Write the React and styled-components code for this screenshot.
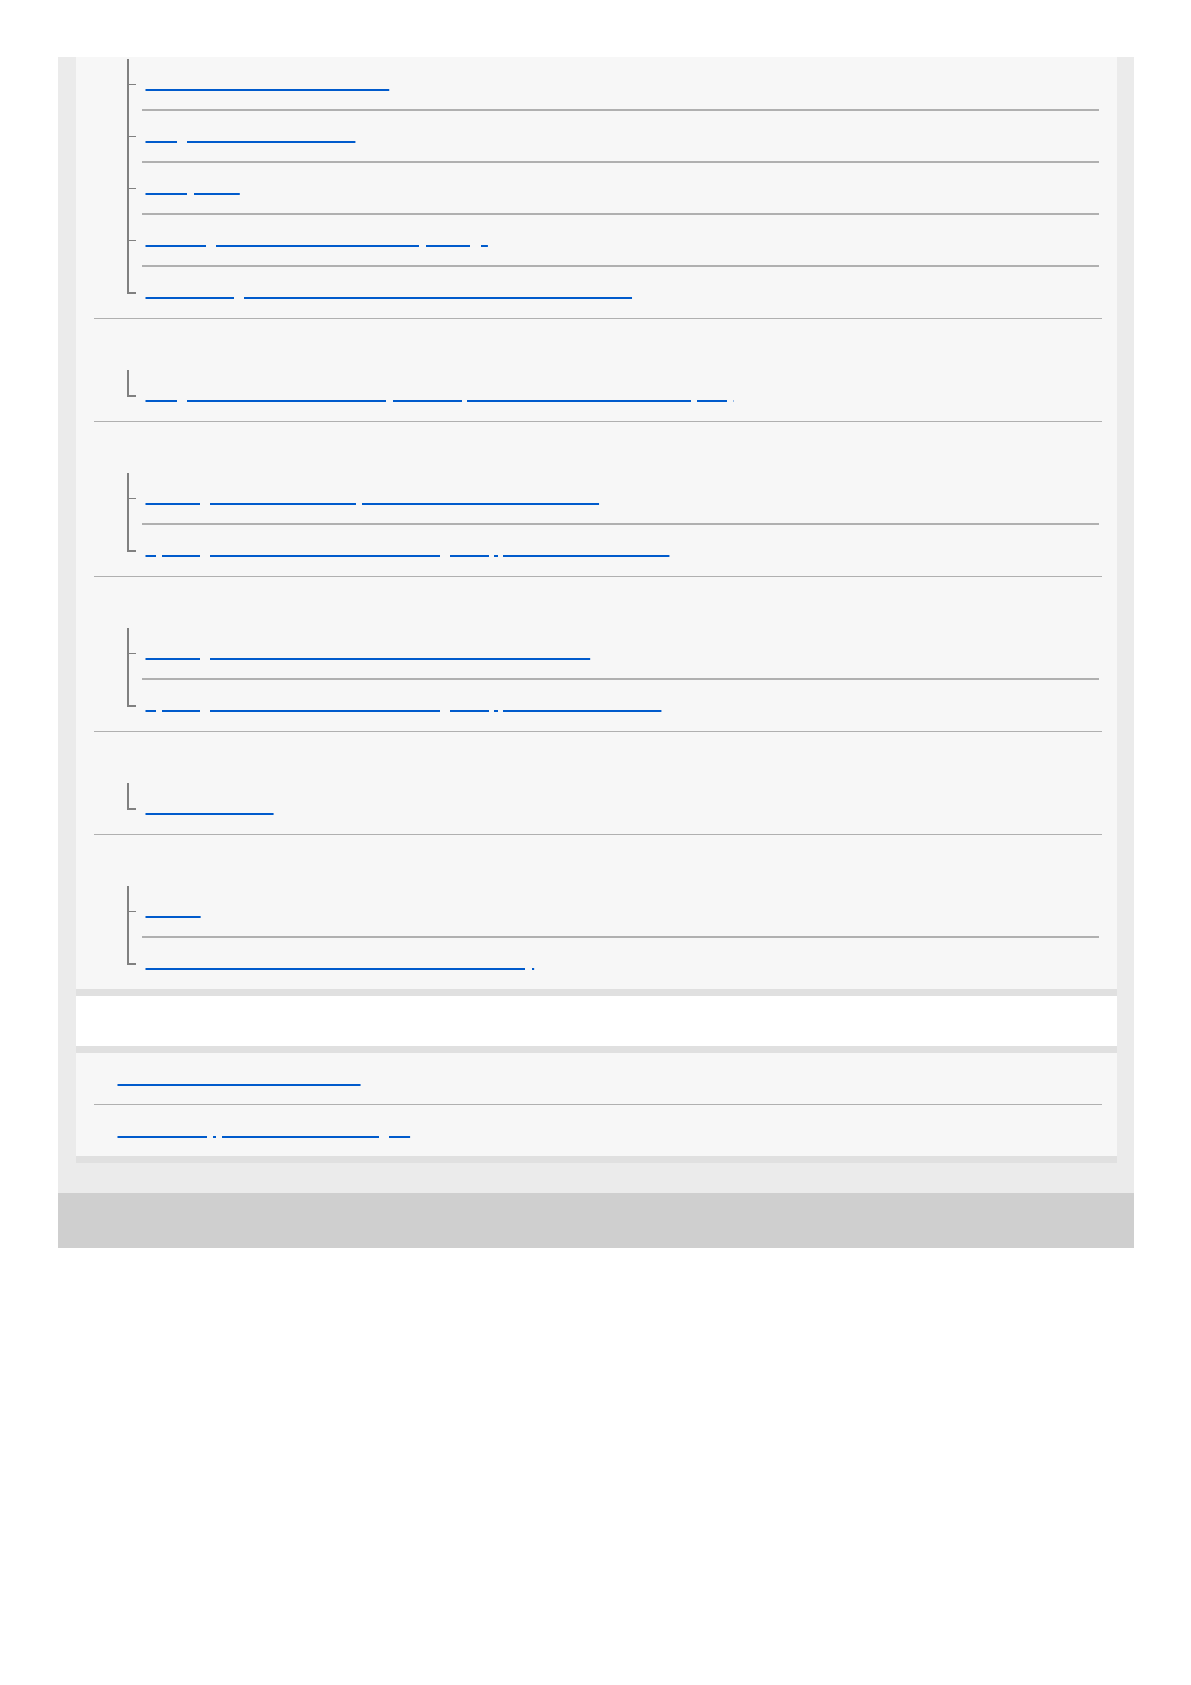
import React from 'react';
import styled, { createGlobalStyle } from 'styled-components';

const GlobalStyle = createGlobalStyle`
  html, body {
    margin: 0;
    padding: 0;
    background: #ffffff;
  }
  body {
    font-family: 'Liberation Sans', Arial, sans-serif;
    font-size: 16px;
  }
`;

const Page = styled.div`
  width: 1076px;
  margin: 0 auto;
  padding-top: 57px;
`;

const Main = styled.main`
  background: #ebebeb;
  padding: 0 17px 30px 18px;
`;

const Panel = styled.div`
  background: ${p => (p.$white ? '#ffffff' : '#f7f7f7')};
  border-bottom: 7px solid #e0e0e0;
  padding: ${p => p.$top || 0}px 15px 0 18px;
  box-sizing: border-box;
`;

const Section = styled.div`
  border-bottom: 1px solid #b0b0b0;

  &:last-child {
    border-bottom: none;
  }
`;

const SectionTitle = styled.h2`
  margin: 0;
  padding: 15px 0 16px 10px;
  font-size: 16px;
  line-height: 20px;
  font-weight: 700;
  color: transparent;
`;

const SubList = styled.ul`
  list-style: none;
  margin: 0 0 0 33px;
  padding: 0;
`;

const Row = styled.li`
  display: flex;
`;

const Branch = styled.div`
  width: 9px;
  flex-shrink: 0;
  display: flex;
  flex-direction: column;
`;

const BranchTop = styled.div`
  box-sizing: border-box;
  height: ${p => (p.$last ? 27 : 26)}px;
  border-left: 2px solid #808080;
  border-bottom: ${p => (p.$last ? 2 : 1)}px solid #808080;
`;

const BranchRest = styled.div`
  flex: 1;
  border-left: ${p => (p.$last ? 'none' : '2px solid #808080')};
`;

const Body = styled.div`
  flex: 1;
  margin: 0 3px 0 6px;
  padding: 14px 0 ${p => (p.$last ? 17 : 16)}px 4px;
  line-height: 20px;
  border-bottom: ${p => (p.$last ? 'none' : '2px solid #b0b0b0')};
`;

const Link = styled.a`
  color: transparent;
  text-decoration: underline;
  text-decoration-color: #005bcc;
  text-decoration-thickness: 1.5px;
`;

const PanelTitle = styled.h2`
  margin: 0;
  padding: 15px 0 15px 10px;
  font-size: 16px;
  line-height: 20px;
  font-weight: 700;
  color: transparent;
`;

const PlainList = styled.ul`
  list-style: none;
  margin: 0;
  padding: 0;
`;

const PlainItem = styled.li`
  padding: 15px 0 16px 24px;
  line-height: 20px;
  border-bottom: 1px solid #b0b0b0;

  &:last-child {
    border-bottom: none;
  }
`;

const Footer = styled.footer`
  height: 55px;
  background: #cfcfcf;
`;

const sections = [
  {
    title: null,
    items: [
      'About the indicator on the headset',
      'Using all the headset controls',
      'Battery notes',
      'Initializing the headset to restore factory settings',
      'Reconnecting the headset to two Bluetooth devices at the same time',
    ],
  },
  {
    title: 'Using the voice assist function',
    items: ['Using the voice assist function on your smartphone via Bluetooth connection (iPad)'],
  },
  {
    title: 'Wi-Fi connection (Android)',
    items: [
      'Listening to music on the computer connected via Wi-Fi network',
      'Updating the software of the headset using the app on an Android devices',
    ],
  },
  {
    title: 'Wi-Fi connection (iPhone)',
    items: [
      'Listening to music on the iPhone connected via Wi-Fi networks',
      'Updating the software of the headset using the app on an iPhone or iPad',
    ],
  },
  {
    title: 'Status',
    items: ['Connection status'],
  },
  {
    title: 'Important information',
    items: ['Caution', 'Notes on wireless Bluetooth communication and safety'],
  },
];

const supportLinks = ['Trademarks and software licenses', 'Customer support websites for the region'];

function TreeItem({ text, last }) {
  return (
    <Row>
      <Branch>
        <BranchTop $last={last} />
        <BranchRest $last={last} />
      </Branch>
      <Body $last={last}>
        <Link href="#">{text}</Link>
      </Body>
    </Row>
  );
}

export default function App() {
  return (
    <>
      <GlobalStyle />
      <Page>
        <Main>
          <Panel $top={2}>
            {sections.map((section, i) => (
              <Section key={i}>
                {section.title && <SectionTitle>{section.title}</SectionTitle>}
                <SubList>
                  {section.items.map((item, j) => (
                    <TreeItem key={j} text={item} last={j === section.items.length - 1} />
                  ))}
                </SubList>
              </Section>
            ))}
          </Panel>
          <Panel $white>
            <PanelTitle>Related information</PanelTitle>
          </Panel>
          <Panel>
            <PlainList>
              {supportLinks.map((item, i) => (
                <PlainItem key={i}>
                  <Link href="#">{item}</Link>
                </PlainItem>
              ))}
            </PlainList>
          </Panel>
        </Main>
        <Footer />
      </Page>
    </>
  );
}
